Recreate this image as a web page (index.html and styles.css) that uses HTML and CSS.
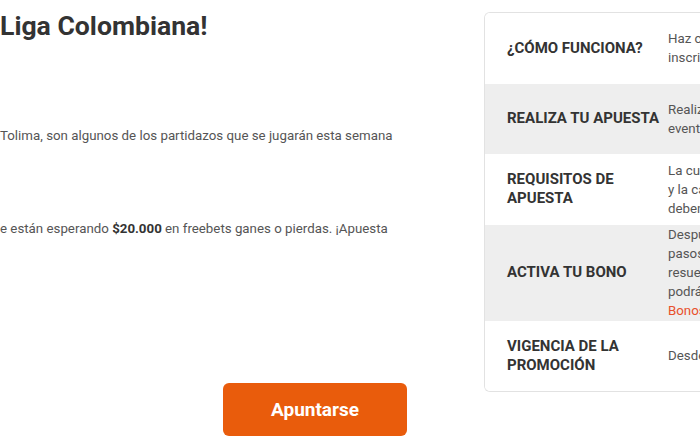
FILE: index.html
```html
<!DOCTYPE html>
<html lang="es">
<head>
<meta charset="utf-8">
<title>Liga Colombiana</title>
<link rel="stylesheet" href="styles.css">
</head>
<body>
<div class="page">
  <main class="content">
    <h1 class="title">Liga Colombiana!</h1>
    <p class="text text-first">Tolima, son algunos de los partidazos que se jugarán esta semana</p>
    <p class="text text-second">e están esperando <strong>$20.000</strong> en freebets ganes o pierdas. ¡Apuesta</p>
    <div class="cta">
      <a class="btn" href="#">Apuntarse</a>
    </div>
  </main>
  <aside class="card">
    <div class="row">
      <div class="label">¿CÓMO FUNCIONA?</div>
      <div class="desc"><span>Haz c</span><span>inscri</span></div>
    </div>
    <div class="row alt">
      <div class="label">REALIZA TU APUESTA</div>
      <div class="desc"><span>Realiz</span><span>evento</span></div>
    </div>
    <div class="row">
      <div class="label">REQUISITOS DE APUESTA</div>
      <div class="desc"><span>La cu</span><span>y la ca</span><span>deben</span></div>
    </div>
    <div class="row alt">
      <div class="label">ACTIVA TU BONO</div>
      <div class="desc"><span>Despu</span><span>pasos</span><span>resue</span><span>podrá</span><span class="link">Bonos</span></div>
    </div>
    <div class="row">
      <div class="label">VIGENCIA DE LA PROMOCIÓN</div>
      <div class="desc"><span>Desde</span></div>
    </div>
  </aside>
</div>
</body>
</html>
```
FILE: styles.css
```css
html, body {
  margin: 0;
  padding: 0;
  background: #ffffff;
  overflow: hidden;
}
body {
  font-family: Roboto, "Liberation Sans", Arial, sans-serif;
  color: #555555;
  width: 700px;
  height: 441px;
}
.page {
  display: flex;
  align-items: flex-start;
  width: 700px;
}
.content {
  width: 484px;
  flex: 0 0 484px;
}
.title {
  margin: 0;
  padding-top: 10px;
  font-size: 26.6px;
  line-height: 32px;
  font-weight: 700;
  color: #333333;
}
.text {
  margin: 0;
  font-size: 13.3px;
  line-height: 20px;
  color: #555555;
  white-space: nowrap;
}
.text strong {
  color: #333333;
  font-weight: 700;
}
.text-first {
  margin-top: 84px;
}
.text-second {
  margin-top: 73px;
}
.cta {
  margin-top: 144px;
  padding-left: 223px;
}
.btn {
  display: flex;
  align-items: center;
  justify-content: center;
  width: 184px;
  height: 53px;
  border-radius: 6px;
  background: #e95c0c;
  color: #ffffff;
  font-size: 19px;
  font-weight: 700;
  text-decoration: none;
}
.card {
  margin-top: 12px;
  flex: 0 0 230px;
  border: 1px solid #e2e2e2;
  border-right: 0;
  border-radius: 6px 0 0 6px;
  overflow: hidden;
}
.row {
  box-sizing: border-box;
  display: grid;
  grid-template-columns: 183px 1fr;
  align-items: center;
  min-height: 70.5px;
  padding: 0.5px 0;
  background: #ffffff;
}
.row.alt {
  background: #eeeeee;
}
.label {
  padding-left: 22px;
  padding-right: 2px;
  font-size: 15px;
  line-height: 19px;
  font-weight: 700;
  color: #333333;
}
.desc {
  display: flex;
  flex-direction: column;
  font-size: 13.3px;
  line-height: 19px;
  color: #555555;
  white-space: nowrap;
}
.desc .link {
  color: #e8512c;
}
```
